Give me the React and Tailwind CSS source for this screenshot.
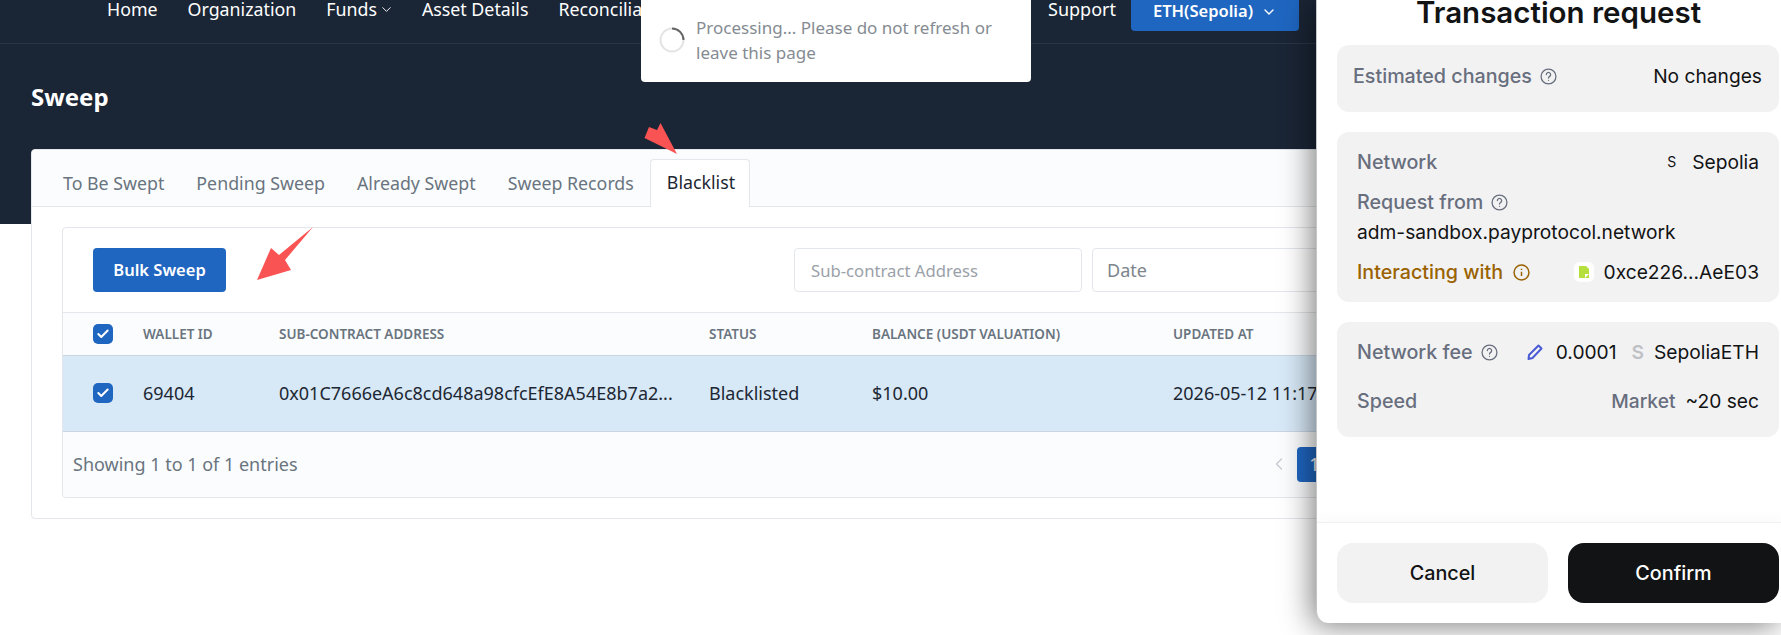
import { Check, ChevronDown, ChevronLeft } from "lucide-react";

const navItems = ["Home", "Organization", "Funds", "Asset Details", "Reconciliation"];
const tabs = ["To Be Swept", "Pending Sweep", "Already Swept", "Sweep Records"];

function Checkbox() {
  return (
    <span className="flex h-5 w-5 items-center justify-center rounded-[5px] bg-[#1f66c1] text-white">
      <Check size={14} strokeWidth={3.5} />
    </span>
  );
}

function Help() {
  return (
    <svg viewBox="0 0 16 16" className="h-[17px] w-[17px]" fill="none" stroke="currentColor" strokeWidth="1.2">
      <circle cx="8" cy="8" r="7" />
      <path d="M6 6.200a2 2 0 1 1 3.100 1.700c-.7.5-1.100.8-1.100 1.600" strokeLinecap="round" />
      <circle cx="8" cy="11.600" r=".6" fill="currentColor" stroke="none" />
    </svg>
  );
}

function Row({ children, className = "" }) {
  return <div className={`flex items-center justify-between ${className}`}>{children}</div>;
}

function Drawer() {
  return (
    <div className="absolute left-[1316px] top-0 flex h-[623px] w-[465px] flex-col rounded-bl-xl border-l border-[#c4c6c8] bg-white font-['Inter',sans-serif] text-[19.200px] text-[#121314] shadow-[-4px_3px_30px_rgba(0,0,0,0.5)]">
      <h2 className="-mt-[8px] h-[53px] pl-[21px] pr-[2px] text-center text-[29.500px] font-semibold leading-[40px]">Transaction request</h2>
      <div className="flex flex-1 flex-col gap-5 pl-[20px] pr-[2px]">
        <div className="flex h-[67px] items-start justify-between rounded-xl bg-[#f2f2f3] pl-4 pr-[17px] pt-[18px] leading-[26px]">
          <span className="flex items-center gap-2 text-[19.700px] font-medium text-[#686e7d]">Estimated changes <Help /></span>
          <span>No changes</span>
        </div>
        <div className="flex h-[170px] flex-col rounded-xl bg-[#f2f2f3] px-5 pt-[17px] leading-[26px]">
          <Row>
            <span className="text-[19.700px] font-medium text-[#686e7d]">Network</span>
            <span className="flex items-center gap-4"><span className="text-[14px]">S</span>Sepolia</span>
          </Row>
          <div className="mt-[14px] flex items-center gap-2 text-[19.700px] font-medium text-[#686e7d]">Request from <Help /></div>
          <div className="mt-1">adm-sandbox.payprotocol.network</div>
          <Row className="mt-[14px]">
            <span className="flex items-center gap-[10px] text-[19.700px] font-medium text-[#9a6300]">
              Interacting with
              <svg viewBox="0 0 16 16" className="h-[17px] w-[17px]" fill="none" stroke="currentColor" strokeWidth="1.400">
                <circle cx="8" cy="8" r="7" />
                <path d="M8 7.200v4M8 4.400v1.200" />
              </svg>
            </span>
            <span className="flex items-center gap-[10px]">
              <span className="flex h-5 w-5 items-center justify-center rounded-md bg-white">
                <svg viewBox="0 0 12 12" className="h-3 w-3"><path d="M1 0h7l3 3v9H1z" fill="#b5df3c" /><path d="M7 8h4l-4 4z" fill="#fff" /></svg>
              </span>
              0xce226...AeE03
            </span>
          </Row>
        </div>
        <div className="flex h-[115px] flex-col rounded-xl bg-[#f2f2f3] px-5 pt-[17px] leading-[26px]">
          <Row>
            <span className="flex items-center gap-2 text-[19.700px] font-medium text-[#686e7d]">Network fee <Help /></span>
            <span className="flex items-center">
              <svg viewBox="0 0 16 16" className="mr-[13px] h-4 w-4" fill="none" stroke="#4a5bd4" strokeWidth="2">
                <path d="M11.500 1.500l3 3-9 9.500L1.500 15l.5-4z" strokeLinejoin="round" />
              </svg>
              0.0001
              <span className="ml-[15px] mr-[10px] font-semibold text-[#bfc1c6]">S</span>
              SepoliaETH
            </span>
          </Row>
          <Row className="mt-[23px]">
            <span className="text-[19.700px] font-medium text-[#686e7d]">Speed</span>
            <span><span className="mr-[10px] font-medium text-[#686e7d]">Market</span>~20 sec</span>
          </Row>
        </div>
      </div>
      <div className="flex gap-5 border-t border-[#f0f0f0] pb-5 pl-[20px] pr-[2px] pt-[20px] shadow-[0_-6px_10px_rgba(0,0,0,0.02)]">
        <button className="h-[60px] flex-1 rounded-2xl bg-[#f2f2f3] pt-px text-[19.800px] font-medium">Cancel</button>
        <button className="h-[60px] flex-1 rounded-2xl bg-[#121314] pt-px text-[19.800px] font-medium text-white">Confirm</button>
      </div>
    </div>
  );
}

export default function App() {
  return (
    <div className="relative h-[635px] w-full overflow-hidden bg-white font-['Noto_Sans',sans-serif] text-[18px] text-[#1c2733]">
      {/* dark top area */}
      <div className="h-[224px] bg-[#1a2535]">
        <div className="flex h-[44px] items-start border-b border-[#2a3547] pl-[107px] pr-[482px] text-white">
          <nav className="flex flex-1 gap-[30px] text-[17.800px] leading-[18px]">
            {navItems.map((item) => (
              <a key={item} className="flex items-center gap-[2px]">
                {item}
                {item === "Funds" && <ChevronDown size={15} strokeWidth={1.500} className="-mr-[2px]" />}
              </a>
            ))}
          </nav>
          <span className="mr-[15px] leading-[18px]">Support</span>
          <button className="flex h-[31px] w-[168px] items-center justify-center gap-2 rounded-b bg-[#1f66c1] pb-2 text-[16.500px] font-semibold">
            ETH(Sepolia)
            <ChevronDown size={16} />
          </button>
        </div>
        <h1 className="ml-[31px] mt-[36px] text-[24px] font-bold leading-[34px] text-white">Sweep</h1>
      </div>

      {/* main card */}
      <div className="absolute left-[31px] right-[30px] top-[149px] rounded border border-[#e3e6ea] bg-white pb-[20px]">
        <div className="flex h-[57px] items-end gap-[32px] rounded-t border-b border-[#e3e6ea] bg-[#fbfcfd] pl-[31px] text-[17.800px] text-[#69747f]">
          {tabs.map((tab) => (
            <a key={tab} className="pb-[11px] leading-[24px]">{tab}</a>
          ))}
          <a className="-mb-px -ml-4 h-[48px] rounded-t border border-b-0 border-[#e3e6ea] bg-white pl-4 pr-[14px] pt-[10px] leading-[24px] text-[#1c2733]">Blacklist</a>
        </div>
        <div className="mx-[30px] mt-[20px] rounded border border-[#e3e6ea] bg-white">
          <div className="flex h-[85px] items-start border-b border-[#e3e6ea] px-[30px] pt-[20px]">
            <button className="h-11 w-[133px] rounded bg-[#1f66c1] text-[16.500px] font-semibold text-white">Bulk Sweep</button>
            <div className="ml-auto flex gap-[10px]">
              <input readOnly placeholder="Sub-contract Address" className="h-11 w-[288px] rounded border border-[#e3e6ea] px-4 text-[16.700px] placeholder:text-[#9aa1a9]" />
              <input readOnly placeholder="Date" className="h-11 w-[597px] rounded border border-[#e3e6ea] px-[14px] placeholder:text-[#7d858d]" />
            </div>
          </div>
          <table className="w-full table-fixed border-collapse">
            <thead className="bg-[#fbfcfd]">
              <tr className="h-[42px] text-left text-[13.500px] font-semibold text-[#69747f]">
                <th className="w-[80px] pl-[30px]"><Checkbox /></th>
                <th className="w-[136px] font-semibold">WALLET ID</th>
                <th className="w-[430px] font-semibold">SUB-CONTRACT ADDRESS</th>
                <th className="w-[163px] font-semibold">STATUS</th>
                <th className="w-[301px] font-semibold">BALANCE (USDT VALUATION)</th>
                <th className="font-semibold">UPDATED AT</th>
              </tr>
            </thead>
            <tbody>
              <tr className="h-[76px] border-y border-[#c9d6e2] bg-[#d7e8f6]">
                <td className="pl-[30px]"><Checkbox /></td>
                <td>69404</td>
                <td>0x01C7666eA6c8cd648a98cfcEfE8A54E8b7a2...</td>
                <td>Blacklisted</td>
                <td>$10.00</td>
                <td>2026-05-12 11:17:30</td>
              </tr>
            </tbody>
          </table>
          <div className="flex h-[65px] items-center justify-between rounded-b bg-[#fbfcfd] pl-[10px] text-[#69747f]">
            <span>Showing 1 to 1 of 1 entries</span>
            <div className="mr-[387px] flex items-center gap-2">
              <ChevronLeft size={20} strokeWidth={1.500} className="text-[#c4cad0]" />
              <span className="flex h-[35px] w-[35px] items-center justify-center rounded bg-[#1f66c1] text-white">1</span>
            </div>
          </div>
        </div>
      </div>

      {/* annotation arrows */}
      <svg viewBox="0 0 40 40" className="absolute left-[640px] top-[122px] h-10 w-10">
        <path d="M37 32 L20.500 1 L17 8 L9 5 L4.500 16 Z" fill="#f95353" />
      </svg>
      <svg viewBox="0 0 60 60" className="absolute left-[255px] top-[226px] h-[60px] w-[60px]">
        <path d="M58 1 L30 34 L36 44 L2 54 L16 22 L24 29 Z" fill="#f95353" />
      </svg>

      {/* toast */}
      <div className="absolute left-[641px] top-[-10px] flex h-[92px] w-[390px] items-center gap-[11px] rounded-b bg-white pl-[18px] pt-[8px] text-[17px] text-[#858b92]">
        <svg viewBox="0 0 26 26" className="h-[26px] w-[26px] shrink-0" fill="none" strokeWidth="2">
          <circle cx="13" cy="13" r="11.500" stroke="#e4e4e4" />
          <path d="M13 1.500A11.500 11.500 0 0 1 24.500 13" stroke="#666" />
        </svg>
        <p className="leading-[25px]">Processing... Please do not refresh or leave this page</p>
      </div>

      <Drawer />
    </div>
  );
}
